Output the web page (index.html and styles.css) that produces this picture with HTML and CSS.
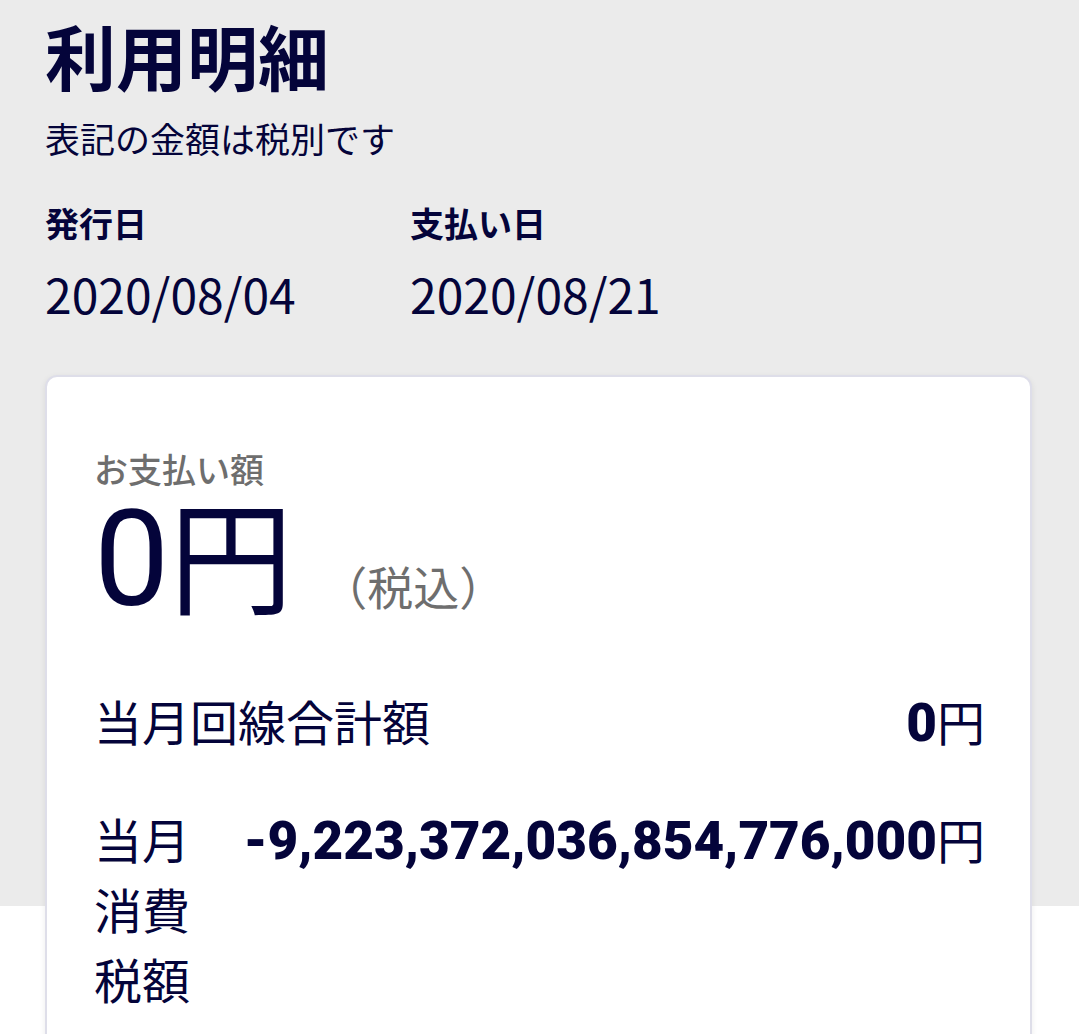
FILE: index.html
```html
<!DOCTYPE html>
<html lang="ja">
<head>
    <meta charset="UTF-8">
    <meta name="viewport" content="width=device-width, initial-scale=1.0">
    <title>利用明細</title>
    <link rel="stylesheet" href="styles.css">
</head>
<body>
    <div class="page">
        <h1 class="title">利用明細</h1>
        <p class="note">表記の金額は税別です</p>

        <div class="dates">
            <div class="date-item">
                <div class="date-label">発行日</div>
                <div class="date-value">2020/08/04</div>
            </div>
            <div class="date-item">
                <div class="date-label">支払い日</div>
                <div class="date-value">2020/08/21</div>
            </div>
        </div>

        <div class="card">
            <div class="pay-label">お支払い額</div>
            <div class="pay-total">
                <span class="pay-amount">0<span class="pay-yen">円</span></span>
                <span class="pay-tax">（税込）</span>
            </div>

            <div class="row">
                <div class="row-label">当月回線合計額</div>
                <div class="row-value">0<span class="yen">円</span></div>
            </div>
            <div class="row">
                <div class="row-label">当月消費税額</div>
                <div class="row-value">-9,223,372,036,854,776,000<span class="yen">円</span></div>
            </div>
        </div>
    </div>
</body>
</html>
```

FILE: styles.css
```css
* {
    margin: 0;
    padding: 0;
    box-sizing: border-box;
}

body {
    font-family: 'Noto Sans CJK JP', 'Noto Sans', sans-serif;
    color: #04043a;
    background: linear-gradient(to bottom, #ebebeb 906px, #ffffff 906px);
    min-height: 100vh;
}

.page {
    padding: 0 47px 0 45px;
}

.title {
    font-size: 71px;
    font-weight: 700;
    line-height: 1.2;
    padding-top: 12px;
}

.note {
    font-size: 35px;
    line-height: 1.4;
    margin-top: 16px;
}

.dates {
    display: flex;
    margin-top: 37px;
}

.date-item {
    width: 365px;
}

.date-label {
    font-size: 34px;
    font-weight: 700;
    line-height: 1.4;
}

.date-value {
    font-size: 48px;
    line-height: 1.4;
    margin-top: 13px;
}

.card {
    margin-top: 48px;
    background: #ffffff;
    border: 2px solid #dedee9;
    border-radius: 12px;
    box-shadow: 0 2px 6px rgba(0,0,0,0.08);
    padding: 68px 45px 40px 47px;
    min-height: 700px;
}

.pay-label {
    font-size: 34px;
    font-weight: 500;
    color: #6e6e6e;
    line-height: 1.4;
}

.pay-total {
    display: flex;
    align-items: baseline;
    margin-top: -4px;
}

.pay-amount {
    font-family: 'Roboto', 'Noto Sans', sans-serif;
    font-size: 134px;
    line-height: 1;
}

.pay-yen {
    font-family: 'Noto Sans CJK JP', sans-serif;
    font-size: 124px;
}

.pay-tax {
    font-size: 46px;
    color: #6e6e6e;
    margin-left: 28px;
}

.row {
    display: flex;
    justify-content: space-between;
    align-items: flex-start;
    margin-top: 45px;
}

.pay-total + .row {
    margin-top: 58px;
}

.row-label {
    font-size: 48px;
    line-height: 70px;
    flex: 1;
    min-width: 0;
}

.row-value {
    font-family: 'Roboto', 'Noto Sans', sans-serif;
    font-size: 53px;
    font-weight: 900;
    line-height: 70px;
    white-space: nowrap;
    margin-left: 40px;
}

.row-value .yen {
    font-family: 'Noto Sans CJK JP', sans-serif;
    font-size: 48px;
    font-weight: 400;
}
```
